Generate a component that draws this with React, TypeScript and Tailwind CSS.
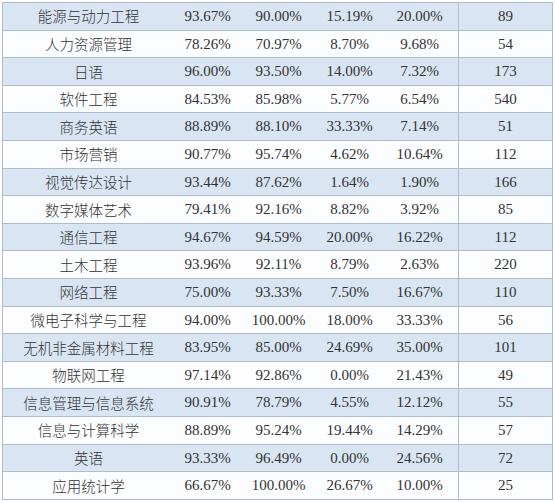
import React from 'react';

interface Row {
  name: string;
  a: string;
  b: string;
  c: string;
  d: string;
  n: number;
}

const rows: Row[] = [
  { name: '能源与动力工程', a: '93.67%', b: '90.00%', c: '15.19%', d: '20.00%', n: 89 },
  { name: '人力资源管理', a: '78.26%', b: '70.97%', c: '8.70%', d: '9.68%', n: 54 },
  { name: '日语', a: '96.00%', b: '93.50%', c: '14.00%', d: '7.32%', n: 173 },
  { name: '软件工程', a: '84.53%', b: '85.98%', c: '5.77%', d: '6.54%', n: 540 },
  { name: '商务英语', a: '88.89%', b: '88.10%', c: '33.33%', d: '7.14%', n: 51 },
  { name: '市场营销', a: '90.77%', b: '95.74%', c: '4.62%', d: '10.64%', n: 112 },
  { name: '视觉传达设计', a: '93.44%', b: '87.62%', c: '1.64%', d: '1.90%', n: 166 },
  { name: '数字媒体艺术', a: '79.41%', b: '92.16%', c: '8.82%', d: '3.92%', n: 85 },
  { name: '通信工程', a: '94.67%', b: '94.59%', c: '20.00%', d: '16.22%', n: 112 },
  { name: '土木工程', a: '93.96%', b: '92.11%', c: '8.79%', d: '2.63%', n: 220 },
  { name: '网络工程', a: '75.00%', b: '93.33%', c: '7.50%', d: '16.67%', n: 110 },
  { name: '微电子科学与工程', a: '94.00%', b: '100.00%', c: '18.00%', d: '33.33%', n: 56 },
  { name: '无机非金属材料工程', a: '83.95%', b: '85.00%', c: '24.69%', d: '35.00%', n: 101 },
  { name: '物联网工程', a: '97.14%', b: '92.86%', c: '0.00%', d: '21.43%', n: 49 },
  { name: '信息管理与信息系统', a: '90.91%', b: '78.79%', c: '4.55%', d: '12.12%', n: 55 },
  { name: '信息与计算科学', a: '88.89%', b: '95.24%', c: '19.44%', d: '14.29%', n: 57 },
  { name: '英语', a: '93.33%', b: '96.49%', c: '0.00%', d: '24.56%', n: 72 },
  { name: '应用统计学', a: '66.67%', b: '100.00%', c: '26.67%', d: '10.00%', n: 25 },
];

const App: React.FC = () => {
  return (
    <div className="w-[555px] h-[503px] bg-white pt-[2px] pl-[2px] overflow-hidden [font-family:'Liberation_Serif','Times_New_Roman',serif]">
      <div className="w-[551px] border-t border-l border-r border-[#aebdcd] text-[15px] text-[#333333]">
        {rows.map((row, i) => (
          <div
            key={row.name}
            className={`grid grid-cols-[169px_71px_71px_71px_74px_1fr] h-[27.6px] border-b border-[#aebdcd] ${
              i % 2 === 0 ? 'bg-[#d9e5f3]' : 'bg-[#fcfdff]'
            }`}
          >
            <div className="flex items-center justify-center [font-family:'Noto_Sans_CJK_SC',sans-serif] text-[14.5px] font-light pl-[2px]">
              {row.name}
            </div>
            <div className="flex items-center justify-center">{row.a}</div>
            <div className="flex items-center justify-center">{row.b}</div>
            <div className="flex items-center justify-center">{row.c}</div>
            <div className="flex items-center justify-center pr-[4px] border-r border-[#aebdcd]">{row.d}</div>
            <div className="flex items-center justify-center">{row.n}</div>
          </div>
        ))}
      </div>
    </div>
  );
};

export default App;
